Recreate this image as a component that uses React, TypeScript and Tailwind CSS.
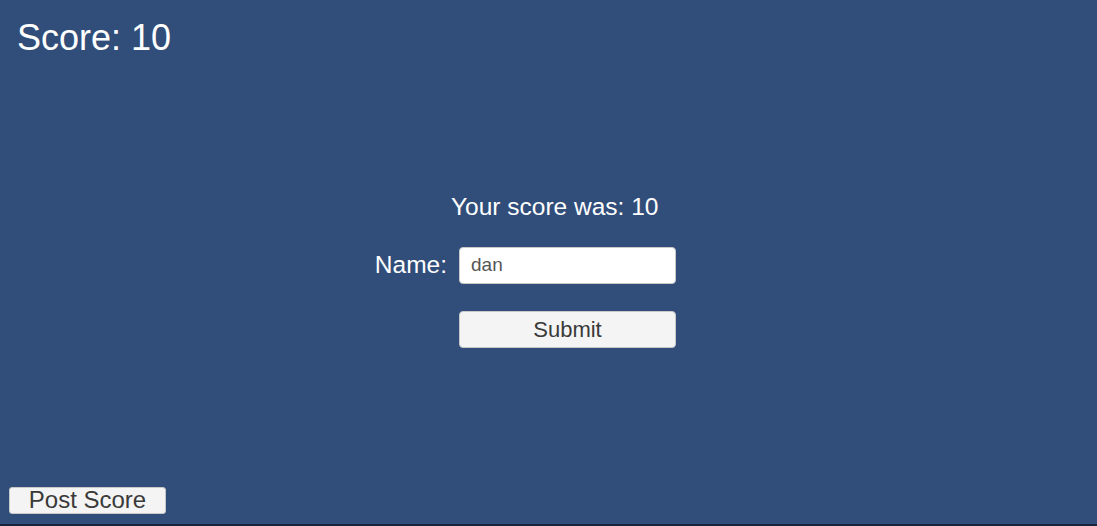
export default function App() {
  return (
    <div className="h-[526px] w-full bg-[#314e7a] border-b-2 border-[#18243a] flex flex-col font-['Liberation_Sans',Arial,sans-serif] text-white">
      <div className="ml-[17px] mt-[20px] text-[36px] leading-none h-[36px]">Score: 10</div>

      <div className="mt-[139px] flex flex-col">
        <p className="ml-[451px] text-[24.5px] leading-none h-[24px]">Your score was: 10</p>
        <div className="mt-[28px] flex items-center">
          <label className="w-[447px] text-right text-[24.5px] leading-none">Name:</label>
          <div className="ml-[12px] w-[217px] h-[37px] bg-white rounded-[4px] border border-[#c8c8c8] flex items-center pl-[11px] text-[19px] text-[#555555]">
            dan
          </div>
        </div>
        <button className="mt-[27px] ml-[459px] w-[217px] h-[37px] bg-[#f4f4f4] rounded-[4px] border border-[#c8c8c8] text-[22px] text-[#3a3a3a] leading-none">
          Submit
        </button>
      </div>

      <div className="mt-auto mb-[9px] ml-[9px]">
        <button className="w-[157px] h-[27px] bg-[#f4f4f4] rounded-[3px] border border-[#c8c8c8] text-[24px] text-[#3a3a3a] leading-none">
          Post Score
        </button>
      </div>
    </div>
  );
}
